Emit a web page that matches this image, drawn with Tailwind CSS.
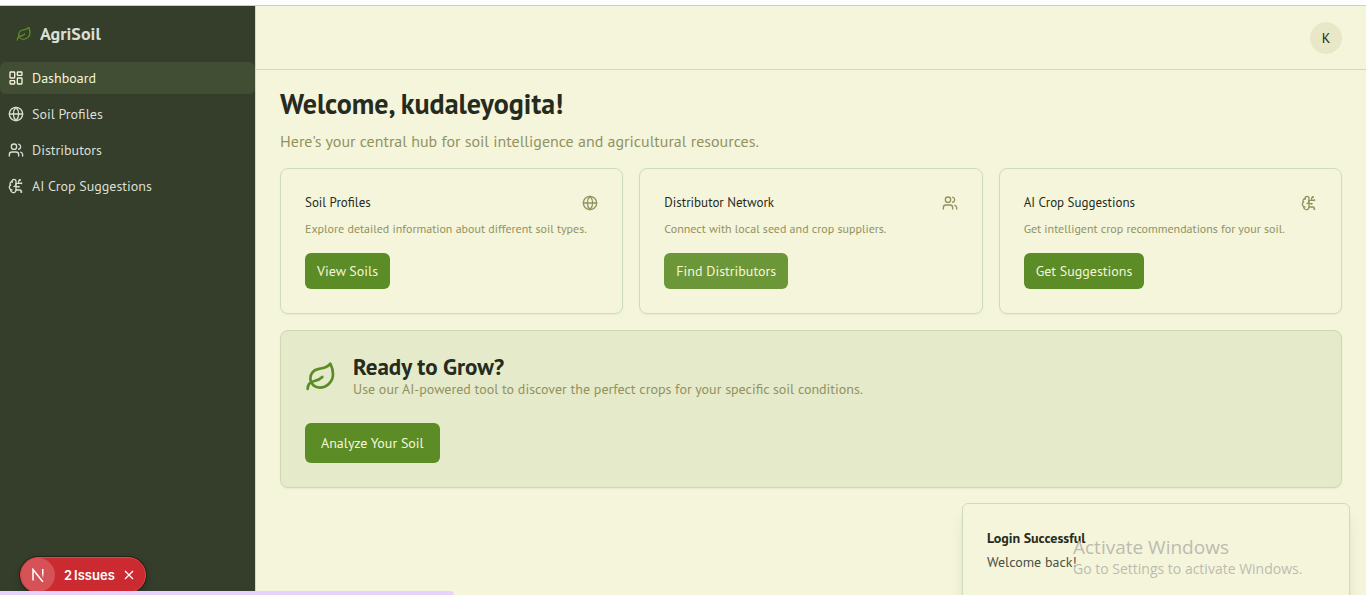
<!DOCTYPE html>
<html lang="en">
<head>
<meta charset="utf-8">
<meta name="viewport" content="width=device-width, initial-scale=1">
<title>AgriSoil</title>
<script src="https://cdn.jsdelivr.net/npm/@tailwindcss/browser@4"></script>
</head>
<body class="relative flex h-screen flex-col overflow-hidden bg-[#f5f5dc] font-['PT_Sans','Noto_Sans',sans-serif] text-sm text-[#262b20]">
<svg class="hidden" aria-hidden="true">
  <defs>
    <symbol id="leaf" viewBox="0 0 24 24"><path d="M11 20A7 7 0 0 1 9.8 6.1C15.5 5 17 4.48 19 2c1 2 2 4.18 2 8 0 5.5-4.78 10-10 10Z"/><path d="M2 21c0-3 1.85-5.36 5.08-6C9.5 14.52 12 13 13 12"/></symbol>
    <symbol id="grid" viewBox="0 0 24 24"><rect width="7" height="9" x="3" y="3" rx="1"/><rect width="7" height="5" x="14" y="3" rx="1"/><rect width="7" height="9" x="14" y="12" rx="1"/><rect width="7" height="5" x="3" y="16" rx="1"/></symbol>
    <symbol id="globe" viewBox="0 0 24 24"><circle cx="12" cy="12" r="10"/><path d="M12 2a14.5 14.5 0 0 0 0 20 14.5 14.5 0 0 0 0-20"/><path d="M2 12h20"/></symbol>
    <symbol id="users" viewBox="0 0 24 24"><path d="M16 21v-2a4 4 0 0 0-4-4H6a4 4 0 0 0-4 4v2"/><circle cx="9" cy="7" r="4"/><path d="M22 21v-2a4 4 0 0 0-3-3.87"/><path d="M16 3.13a4 4 0 0 1 0 7.75"/></symbol>
    <symbol id="brain" viewBox="0 0 24 24"><path d="M12 5a3 3 0 1 0-5.997.125 4 4 0 0 0-2.526 5.77 4 4 0 0 0 .556 6.588A4 4 0 1 0 12 18Z"/><path d="M9 13a4.5 4.5 0 0 0 3-4"/><path d="M6.003 5.125A3 3 0 0 0 6.401 6.5"/><path d="M3.477 10.896a4 4 0 0 1 .585-.396"/><path d="M6 18a4 4 0 0 1-1.967-.516"/><path d="M12 13h4"/><path d="M12 18h6a2 2 0 0 1 2 2v1"/><path d="M12 8h8"/><path d="M16 8V5a2 2 0 0 1 2-2"/><circle cx="16" cy="13" r=".5"/><circle cx="18" cy="3" r=".5"/><circle cx="20" cy="21" r=".5"/><circle cx="20" cy="8" r=".5"/></symbol>
  </defs>
</svg>
<div class="h-[6px] shrink-0 border-b border-[#cccccc] bg-white"></div>
<div class="flex min-h-0 flex-1">
  <aside class="w-64 shrink-0 border-r border-[#cddcc0] bg-[#353d2b] text-[#dcdfd3]">
    <div class="flex h-14 items-center gap-2 px-4">
      <svg class="size-4 fill-none stroke-[#5b8c26] stroke-2 [stroke-linecap:round] [stroke-linejoin:round]"><use href="#leaf"/></svg>
      <span class="text-lg font-bold">AgriSoil</span>
    </div>
    <nav class="flex flex-col gap-1">
      <a href="#" class="flex h-8 items-center gap-2 rounded-md bg-[#424e33] px-2 text-[#f5f5dc]"><svg class="size-4 fill-none stroke-current stroke-2 [stroke-linecap:round] [stroke-linejoin:round]"><use href="#grid"/></svg>Dashboard</a>
      <a href="#" class="flex h-8 items-center gap-2 rounded-md px-2"><svg class="size-4 fill-none stroke-current stroke-2 [stroke-linecap:round] [stroke-linejoin:round]"><use href="#globe"/></svg>Soil Profiles</a>
      <a href="#" class="flex h-8 items-center gap-2 rounded-md px-2"><svg class="size-4 fill-none stroke-current stroke-2 [stroke-linecap:round] [stroke-linejoin:round]"><use href="#users"/></svg>Distributors</a>
      <a href="#" class="flex h-8 items-center gap-2 rounded-md px-2"><svg class="size-4 fill-none stroke-current stroke-2 [stroke-linecap:round] [stroke-linejoin:round]"><use href="#brain"/></svg>AI Crop Suggestions</a>
    </nav>
  </aside>
  <div class="min-w-0 flex-1">
    <header class="flex h-16 items-center justify-end border-b border-[#cbdcbf] px-6">
      <button class="size-8 rounded-full bg-[#e8e8c9]">K</button>
    </header>
    <main class="flex flex-col gap-4 px-6 py-4">
      <div class="flex flex-col gap-2">
        <h1 class="text-[28px] leading-9 font-bold">Welcome, kudaleyogita!</h1>
        <p class="text-base leading-[22px] text-[#92925f]">Here's your central hub for soil intelligence and agricultural resources.</p>
      </div>
      <div class="grid grid-cols-3 gap-4">
        <section class="rounded-lg border border-[#cbdcbf] p-6 shadow-xs">
          <div class="flex items-center justify-between"><h2 class="text-[13px] leading-5">Soil Profiles</h2><svg class="size-4 fill-none stroke-[#92925f] stroke-2 [stroke-linecap:round] [stroke-linejoin:round]"><use href="#globe"/></svg></div>
          <p class="mt-2 text-xs text-[#92925f]">Explore detailed information about different soil types.</p>
          <button class="mt-4 h-9 rounded-md bg-[#5b8c26] px-3 text-[#f5f5dc]">View Soils</button>
        </section>
        <section class="rounded-lg border border-[#cbdcbf] p-6 shadow-xs">
          <div class="flex items-center justify-between"><h2 class="text-[13px] leading-5">Distributor Network</h2><svg class="size-4 fill-none stroke-[#92925f] stroke-2 [stroke-linecap:round] [stroke-linejoin:round]"><use href="#users"/></svg></div>
          <p class="mt-2 text-xs text-[#92925f]">Connect with local seed and crop suppliers.</p>
          <button class="mt-4 h-9 rounded-md bg-[#6b9738] px-3 text-[#f5f5dc]">Find Distributors</button>
        </section>
        <section class="rounded-lg border border-[#cbdcbf] p-6 shadow-xs">
          <div class="flex items-center justify-between"><h2 class="text-[13px] leading-5">AI Crop Suggestions</h2><svg class="size-4 fill-none stroke-[#92925f] stroke-2 [stroke-linecap:round] [stroke-linejoin:round]"><use href="#brain"/></svg></div>
          <p class="mt-2 text-xs text-[#92925f]">Get intelligent crop recommendations for your soil.</p>
          <button class="mt-4 h-9 rounded-md bg-[#5b8c26] px-3 text-[#f5f5dc]">Get Suggestions</button>
        </section>
      </div>
      <section class="rounded-lg border border-[#cddab0] bg-[#e5eaca] p-6 shadow-xs">
        <div class="flex items-center gap-4">
          <svg class="size-8 fill-none stroke-[#5b8c26] stroke-2 [stroke-linecap:round] [stroke-linejoin:round]"><use href="#leaf"/></svg>
          <div>
            <h2 class="text-[23px] leading-6 font-bold">Ready to Grow?</h2>
            <p class="text-[#92925f]">Use our AI-powered tool to discover the perfect crops for your specific soil conditions.</p>
          </div>
        </div>
        <button class="mt-6 h-10 rounded-md bg-[#5b8c26] px-4 text-[#f5f5dc]">Analyze Your Soil</button>
      </section>
    </main>
  </div>
</div>

<!-- Toast, partly below the window's edge -->
<div role="status" class="absolute right-4 -bottom-2 h-[100px] w-[388px] rounded-md border border-[#cbdcbf] bg-[#f5f5dc] p-6 shadow-lg">
  <p class="font-bold">Login Successful</p>
  <p class="mt-1 text-[#4c5142]">Welcome back!</p>
</div>
<!-- System watermark -->
<div class="pointer-events-none absolute right-[57px] bottom-4 w-[236px] font-['Segoe_UI','Open_Sans',sans-serif] whitespace-nowrap text-[#bcbcae]">
  <p class="text-[19px] leading-6">Activate Windows</p>
  <p class="text-[14px] leading-5">Go to Settings to activate Windows.</p>
</div>
<!-- Dev tools badge -->
<div class="absolute bottom-[2px] left-5 flex h-9 w-[126px] items-center rounded-full border border-[#e0484c] bg-[#ca2a30] font-[Inter,sans-serif] text-white shadow-[0_0_0_1px_#202519,0_4px_8px_rgba(0,0,0,0.2)]">
  <button aria-label="Open dev tools" class="flex size-[34px] items-center justify-center rounded-full bg-[#d55257]">
    <svg class="h-[14px] w-[14px] fill-none" viewBox="0 0 14 14" aria-hidden="true">
      <defs><linearGradient id="fade" x1="0" y1="0" x2="0" y2="1"><stop offset=".5" stop-color="#fff"/><stop offset="1" stop-color="#fff" stop-opacity=".1"/></linearGradient></defs>
      <path d="M2 12.5V1.5L12 14" stroke="#fff" stroke-width="1.5"/><path d="M11 1h1.5v9H11z" fill="url(#fade)"/>
    </svg>
  </button>
  <button class="ml-[9px] flex gap-[2px] text-[13px] font-semibold"><span>2</span> <span>Issues</span></button>
  <button aria-label="Dismiss" class="ml-[6px] flex size-4 items-center justify-center"><svg class="size-[10px] stroke-white" viewBox="0 0 10 10"><path d="M1 1l8 8M9 1l-8 8" stroke-width="1.3"/></svg></button>
</div>
<!-- Link status strip -->
<div class="absolute bottom-0 left-0 h-1 w-[454px] rounded-tr bg-[#e8d2fb]"></div>
</body>
</html>
